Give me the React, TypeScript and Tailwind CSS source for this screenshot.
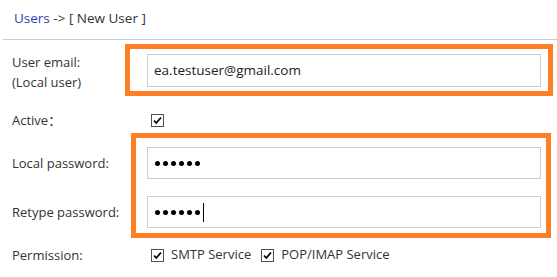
import React from "react";

// 小さなチェックボックス (ネイティブ風)
function Check() {
  return (
    <svg width="13" height="13" viewBox="0 0 13 13" className="shrink-0">
      <rect x="0.5" y="0.5" width="12" height="12" fill="#fff" stroke="#505050" />
      <path d="M3 6.5 L5.3 9 L10 3.5" fill="none" stroke="#000" strokeWidth="1.8" />
    </svg>
  );
}

function Dots({ caret }: { caret?: boolean }) {
  return (
    <div className="flex items-center gap-[3px]">
      {[0, 1, 2, 3, 4, 5].map((i) => (
        <span key={i} className="w-[5px] h-[5px] rounded-full bg-black" />
      ))}
      {caret && <span className="w-px h-[19px] bg-black" />}
    </div>
  );
}

export default function App() {
  return (
    <div className="relative w-[557px] h-[277px] bg-white overflow-hidden font-['Open_Sans',sans-serif] text-[13px] text-[#333]">
      {/* breadcrumb */}
      <div className="h-[39px] pl-[14px] pt-[8px] leading-[20px] text-[13.5px]">
        <span className="text-[#2c44b0]">Users</span> -&gt; [ New User ]
      </div>
      <div className="ml-[3px] border-t border-[#cccccc]" />

      {/* form */}
      <div className="pl-[12px]">
        <div className="flex items-start pt-[12px]">
          <div className="w-[135px] leading-[20px]">
            <div>User email:</div>
            <div>(Local user)</div>
          </div>
          <div className="mt-[2px] w-[394px] h-[33px] border border-[#cccccc] pl-[6px] flex items-center text-[13.5px] text-[#222]">
            ea.testuser@gmail.com
          </div>
        </div>

        <div className="flex items-center mt-[18px] h-[20px]">
          <div className="w-[135px] leading-[20px]">
            Active<span className="font-['Noto_Sans_CJK_SC',sans-serif]">：</span>
          </div>
          <div className="pl-[4px]">
            <Check />
          </div>
        </div>

        <div className="flex items-center mt-[17px] h-[32px]">
          <div className="w-[135px] leading-[20px]">Local password:</div>
          <div className="w-[394px] h-[32px] border border-[#cccccc] pl-[7px] flex items-center">
            <Dots />
          </div>
        </div>

        <div className="flex items-center mt-[17px] h-[32px]">
          <div className="w-[135px] leading-[20px]">Retype password:</div>
          <div className="w-[394px] h-[32px] border border-[#cccccc] pl-[7px] flex items-center">
            <Dots caret />
          </div>
        </div>

        <div className="flex items-center mt-[17px] h-[20px]">
          <div className="w-[135px] leading-[20px]">Permission:</div>
          <div className="flex items-center pl-[4px]">
            <Check />
            <span className="ml-[7px] mr-[10px]">SMTP Service</span>
            <Check />
            <span className="ml-[7px]">POP/IMAP Service</span>
          </div>
        </div>
      </div>

      {/* 注釈の枠 */}
      <div className="absolute left-[125px] top-[44px] w-[428px] h-[52px] border-[5px] border-[#ff7f27]" />
      <div className="absolute left-[131px] top-[133px] w-[420px] h-[105px] border-[5px] border-[#ff7f27]" />
    </div>
  );
}
